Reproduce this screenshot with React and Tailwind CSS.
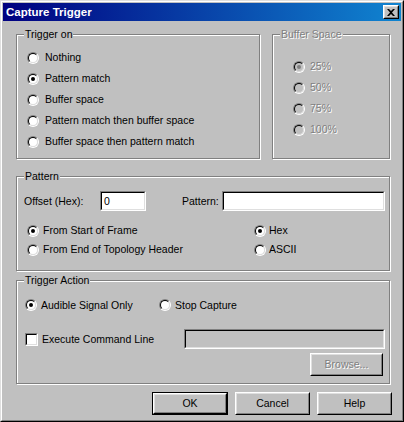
import React from "react";

function Radio({ checked, disabled }) {
  return (
    <span className="w-[12px] h-[12px] rounded-full border border-t-[#808080] border-l-[#808080] border-r-white border-b-white flex shrink-0">
      <span
        className={
          disabled
            ? "flex-1 rounded-full border border-t-black border-l-black border-r-[#dfdfdf] border-b-[#dfdfdf] bg-[#c0c0c0] flex items-center justify-center"
            : "flex-1 rounded-full border border-t-black border-l-black border-r-[#dfdfdf] border-b-[#dfdfdf] bg-white flex items-center justify-center"
        }
      >
        {checked && (
          <span
            className={
              disabled
                ? "w-[4px] h-[4px] rounded-full bg-[#808080]"
                : "w-[4px] h-[4px] rounded-full bg-black"
            }
          />
        )}
      </span>
    </span>
  );
}

function Check() {
  return (
    <span className="w-[13px] h-[13px] border border-t-[#808080] border-l-[#808080] border-r-white border-b-white flex shrink-0">
      <span className="flex-1 border border-t-black border-l-black border-r-[#dfdfdf] border-b-[#dfdfdf] bg-white" />
    </span>
  );
}

function Field({ className, disabled, children }) {
  return (
    <div
      className={
        "border border-t-[#808080] border-l-[#808080] border-r-white border-b-white flex " +
        className
      }
    >
      <div
        className={
          disabled
            ? "flex-1 border border-t-black border-l-black border-r-[#dfdfdf] border-b-[#dfdfdf] bg-[#c0c0c0] flex items-center px-[2px]"
            : "flex-1 border border-t-black border-l-black border-r-[#dfdfdf] border-b-[#dfdfdf] bg-white flex items-center px-[2px]"
        }
      >
        {children}
      </div>
    </div>
  );
}

function Button({ children, def, disabled, className }) {
  const inner = (
    <div className="flex-1 border border-t-white border-l-white border-r-black border-b-black flex">
      <div className="flex-1 border border-t-[#dfdfdf] border-l-[#dfdfdf] border-r-[#808080] border-b-[#808080] flex items-center justify-center">
        <span className={disabled ? "text-[#808080] [text-shadow:1px_1px_0_#fff]" : ""}>{children}</span>
      </div>
    </div>
  );
  if (def) {
    return <div className={"border border-black flex " + className}>{inner}</div>;
  }
  return <div className={"flex " + className}>{inner}</div>;
}

function Group({ label, disabled, className, children }) {
  return (
    <div
      className={
        "relative border border-[#808080] shadow-[1px_1px_0_#fff,inset_1px_1px_0_#fff] " +
        className
      }
    >
      <span
        className={
          disabled
            ? "absolute top-[-7px] left-[7px] px-[1px] bg-[#c0c0c0] leading-[13px] text-[#808080] [text-shadow:1px_1px_0_#fff]"
            : "absolute top-[-7px] left-[7px] px-[1px] bg-[#c0c0c0] leading-[13px]"
        }
      >
        {label}
      </span>
      {children}
    </div>
  );
}

export default function App() {
  return (
    <div className="w-[404px] h-[422px] bg-[#c0c0c0] border border-t-[#dfdfdf] border-l-[#dfdfdf] border-r-black border-b-black font-['Liberation_Sans',Arial,sans-serif] text-[10.5px] text-black leading-[13px] select-none">
      <div className="h-full border border-t-white border-l-white border-r-[#808080] border-b-[#808080] p-[1px] flex flex-col">
        {/* Title bar */}
        <div className="h-[18px] flex items-center bg-[linear-gradient(to_right,#000080,#1084d0)] shrink-0">
          <span className="pl-[3px] text-white font-bold text-[11.5px] flex-1">Capture Trigger</span>
          <div className="w-[16px] h-[14px] mr-[2px] flex border border-t-white border-l-white border-r-black border-b-black bg-[#c0c0c0]">
            <div className="flex-1 border border-t-[#dfdfdf] border-l-[#dfdfdf] border-r-[#808080] border-b-[#808080] flex items-center justify-center">
              <svg width="8" height="7" viewBox="0 0 8 7">
                <path d="M0 0h2l2 2 2-2h2L5 3.5 8 7H6L4 5 2 7H0l3-3.5z" fill="#000" />
              </svg>
            </div>
          </div>
        </div>

        {/* Content */}
        <div className="flex flex-col pl-[13px] pr-[11px] pt-[13px]">
          <div className="flex gap-[12px] h-[125px]">
            <Group label="Trigger on" className="w-[244px]">
              <div className="flex flex-col pt-[12px] pl-[10px]">
                {[
                  ["Nothing", false],
                  ["Pattern match", true],
                  ["Buffer space", false],
                  ["Pattern match then buffer space", false],
                  ["Buffer space then pattern match", false],
                ].map(([t, c]) => (
                  <div key={t} className="h-[21px] flex items-center gap-[6px]">
                    <Radio checked={c} />
                    <span>{t}</span>
                  </div>
                ))}
              </div>
            </Group>
            <Group label="Buffer Space" disabled className="w-[118px]">
              <div className="flex flex-col pt-[21px] pl-[20px]">
                {[
                  ["25%", true],
                  ["50%", false],
                  ["75%", false],
                  ["100%", false],
                ].map(([t, c]) => (
                  <div key={t} className="h-[21px] flex items-center gap-[5px]">
                    <Radio checked={c} disabled />
                    <span className="text-[#808080] [text-shadow:1px_1px_0_#fff]">{t}</span>
                  </div>
                ))}
              </div>
            </Group>
          </div>

          <Group label="Pattern" className="mt-[17px] h-[95px]">
            <div className="flex items-center pt-[14px] pl-[7px] pr-[4px]">
              <span className="w-[76px]">Offset (Hex):</span>
              <Field className="w-[46px] h-[20px]">0</Field>
              <span className="ml-[36px] w-[40px]">Pattern:</span>
              <Field className="flex-1 h-[20px]" />
            </div>
            <div className="grid grid-cols-[227px_1fr] mt-[10px] pl-[10px]">
              <div className="h-[19px] flex items-center gap-[4px]">
                <Radio checked />
                <span>From Start of Frame</span>
              </div>
              <div className="h-[19px] flex items-center gap-[3px]">
                <Radio checked />
                <span>Hex</span>
              </div>
              <div className="h-[19px] flex items-center gap-[4px]">
                <Radio />
                <span>From End of Topology Header</span>
              </div>
              <div className="h-[19px] flex items-center gap-[3px]">
                <Radio />
                <span>ASCII</span>
              </div>
            </div>
          </Group>

          <Group label="Trigger Action" className="mt-[9px] h-[104px]">
            <div className="flex items-center h-[20px] mt-[14px] pl-[8px]">
              <div className="w-[134px] flex items-center gap-[4px]">
                <Radio checked />
                <span>Audible Signal Only</span>
              </div>
              <div className="flex items-center gap-[4px]">
                <Radio />
                <span>Stop Capture</span>
              </div>
            </div>
            <div className="flex items-center h-[20px] mt-[14px] pl-[8px] pr-[4px]">
              <div className="w-[159px] flex items-center gap-[4px]">
                <Check />
                <span>Execute Command Line</span>
              </div>
              <Field disabled className="flex-1 h-[20px]" />
            </div>
            <div className="flex justify-end pr-[6px] mt-[4px]">
              <Button disabled className="w-[73px] h-[23px]">
                Browse...
              </Button>
            </div>
          </Group>

          <div className="flex justify-end gap-[7px] mt-[8px] mr-[-2px]">
            <Button def className="w-[76px] h-[23px]">
              OK
            </Button>
            <Button className="w-[75px] h-[23px]">Cancel</Button>
            <Button className="w-[75px] h-[23px]">Help</Button>
          </div>
        </div>
      </div>
    </div>
  );
}
